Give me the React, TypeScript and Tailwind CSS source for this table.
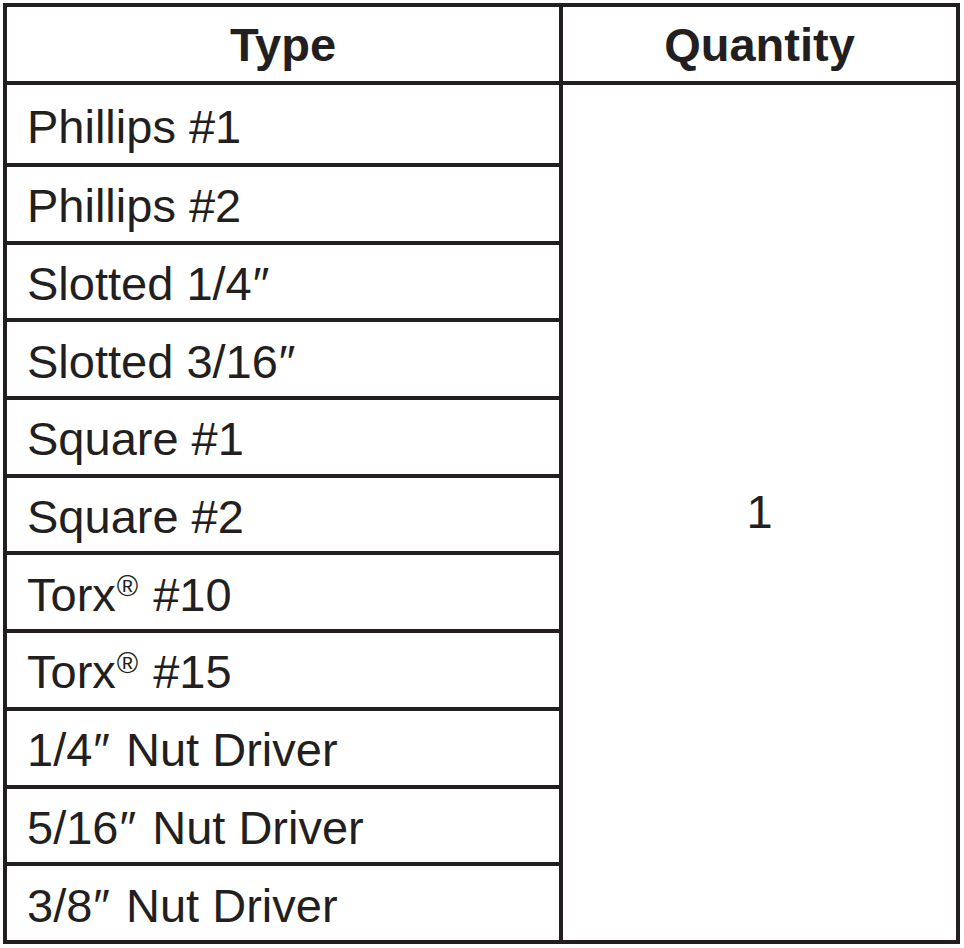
const rows = [
  "Phillips #1",
  "Phillips #2",
  "Slotted 1/4″",
  "Slotted 3/16″",
  "Square #1",
  "Square #2",
  "Torx® #10",
  "Torx® #15",
  "1/4″ Nut Driver",
  "5/16″ Nut Driver",
  "3/8″ Nut Driver",
];

function Label({ text }: { text: string }) {
  // raise the registered mark, give the inch marks a bit of air
  const parts = text.split(/(®|″)/);
  return (
    <>
      {parts.map((p, i) =>
        p === "®" ? (
          <span key={i} className="relative -top-[15px] ml-[1px] mr-[2px] text-[29px]">
            ®
          </span>
        ) : p === "″" ? (
          <span key={i} className="ml-[1px] mr-[3px]">
            ″
          </span>
        ) : (
          <span key={i}>{p}</span>
        )
      )}
    </>
  );
}

export default function App() {
  return (
    <div className="min-h-screen bg-white pl-[3px] pt-[3px] font-['Liberation_Sans',Arial,sans-serif] text-[#231f20]">
      <div className="grid w-[957px] grid-cols-[552px_393px] grid-rows-[74px_78px_repeat(10,73.7px)] gap-[4px] bg-[#231f20] p-[4px]">
        <div className="flex items-center justify-center bg-white pt-[2px] text-[47px] font-bold">
          Type
        </div>
        <div className="flex items-center justify-center bg-white pt-[2px] text-[47px] font-bold">
          Quantity
        </div>
        {rows.map((r, i) => (
          <div
            key={r}
            className="flex items-center whitespace-pre bg-white pl-[20px] pt-[4px] text-[47px] leading-none"
            style={{ gridColumn: 1, gridRow: i + 2 }}
          >
            <span>
              <Label text={r} />
            </span>
          </div>
        ))}
        <div className="col-start-2 row-start-2 row-span-11 flex items-center justify-center bg-white text-[47px]">
          1
        </div>
      </div>
    </div>
  );
}
